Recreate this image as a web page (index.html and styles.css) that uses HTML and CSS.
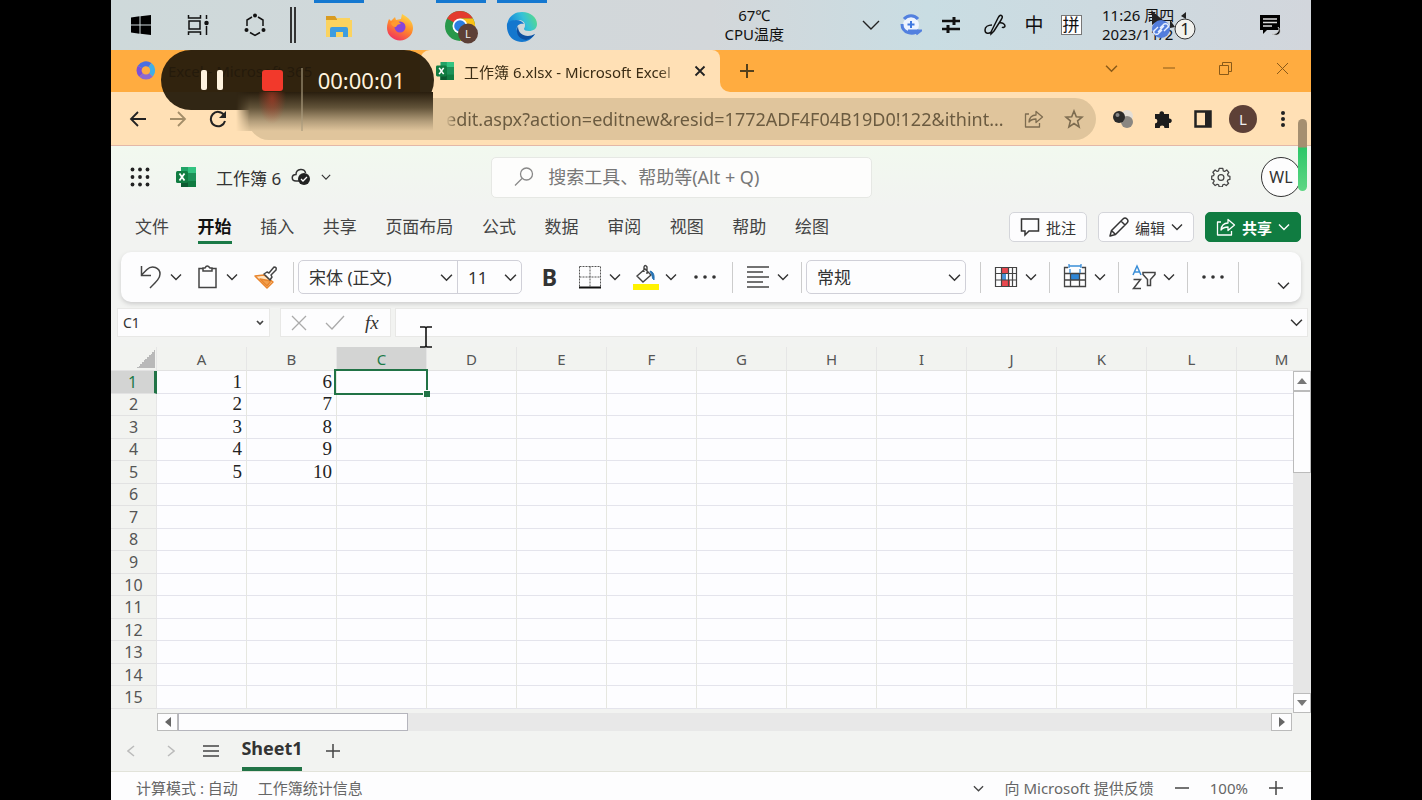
FILE: index.html
```html
<!DOCTYPE html>
<html lang="zh-CN">
<head>
<meta charset="utf-8">
<title>工作簿 6.xlsx - Microsoft Excel</title>
<link rel="stylesheet" href="styles.css">
</head>
<body>
<svg class="defs" aria-hidden="true">
  <symbol id="chev" viewBox="0 0 12 12"><path d="M1 3.500l5 5 5-5" fill="none" stroke="currentColor" stroke-width="1.400"/></symbol>
  <symbol id="share" viewBox="0 0 20 20"><path d="M5 5H1.500v13h14v-4M5 13c.5-4.500 3-7 7-7V2.500l6.500 5.500L12 13.500V10c-3 0-5 .5-7 3z" fill="none" stroke="currentColor" stroke-width="1.300" stroke-linejoin="round"/></symbol>
  <symbol id="excel" viewBox="0 0 20 20">
    <path d="M5 0h14a1 1 0 0 1 1 1v18a1 1 0 0 1-1 1H5z" fill="#21a366"/><path d="M12 0h7a1 1 0 0 1 1 1v5h-8z" fill="#33c481"/><path d="M5 6h15v14H5z" fill="#107c41"/><path d="M12 6h8v8h-8z" fill="#1d9158"/><path d="M5 13h7v7H5z" fill="#0b5a30"/><rect y="4" width="12" height="12" rx="1.500" fill="#107c41"/><path d="M3.500 6.500l5 7M8.500 6.500l-5 7" stroke="#fff" stroke-width="1.800"/>
  </symbol>
</svg>
<div class="screen">
  <header class="taskbar">
    <div class="system">
      <button class="sys" aria-label="开始菜单"><svg width="22" height="22" viewBox="0 0 22 22"><path d="M1 3.500l8.500-1.200v8.200H1zM10.500 2.200L21 1v9.500H10.500zM1 11.500h8.500v8.200L1 18.500zM10.500 11.500H21V21l-10.500-1.200z"/></svg></button>
      <button class="sys" aria-label="任务视图"><svg width="22" height="22" viewBox="0 0 22 22" fill="none" stroke="#111" stroke-width="1.500"><path d="M1.500 1v3h12V1M1.500 21v-3h12v3M2 7h11v8H2zM19.500 1v4M19.500 12v9"/><circle cx="19.500" cy="9" r="1.500" fill="#111"/></svg></button>
      <button class="sys" aria-label="小娜"><svg width="24" height="24" viewBox="0 0 24 24" fill="none" stroke="#111" stroke-width="1.500"><path d="M9 4L4 7v6M15 4l5 3v6M7 19.500l5 3 5-3"/><g fill="#111" stroke="none"><circle cx="12" cy="2.500" r="2"/><circle cx="3.500" cy="17" r="2"/><circle cx="20.500" cy="17" r="2"/></g></svg></button>
    </div>
    <div class="bars"></div>
    <div class="apps">
      <button class="app running" aria-label="文件资源管理器"><svg width="28" height="24" viewBox="0 0 28 24"><path d="M1 1h9l2 3h13v18H1z" fill="#d99b20"/><path d="M12 3h13v3H12zM1 5h26v17H1z" fill="#fbd35f"/><path d="M5 22v-8q0-2 2-2h14q2 0 2 2v8h-5v-5h-7v5z" fill="#3d9ce0"/></svg></button>
      <button class="app" aria-label="Firefox"><svg width="28" height="28" viewBox="0 0 28 28"><defs><linearGradient id="ff" x1=".8" y1="0" x2=".3" y2="1"><stop offset="0" stop-color="#ffe04a"/><stop offset=".5" stop-color="#ff8a2a"/><stop offset="1" stop-color="#f0305f"/></linearGradient></defs><path d="M3 6l2 2 4-4 1 3 5-1 1-5c7 4 11 8 11 14a13 12.500 0 0 1-26 0c0-4 1-6 2-9z" fill="url(#ff)"/><circle cx="14" cy="14" r="5.500" fill="#8745d9"/><path d="M5 10c4-3 8-2 10 1-3 0-4 1-5 3-3 0-5-2-5-4z" fill="#ff9a30"/></svg></button>
      <button class="app running" aria-label="Chrome"><svg width="34" height="34" viewBox="0 0 34 34"><circle cx="16" cy="16" r="15" fill="#28984a"/><path d="M16 16L3 8.500A15 15 0 0 1 29 8.500H16z" fill="#e33b2e"/><path d="M16 8.500h13A15 15 0 0 1 16 31l6.500-11z" fill="#fbc116"/><circle cx="16" cy="16" r="7.500" fill="#fff"/><circle cx="16" cy="16" r="5.800" fill="#2a7de1"/><circle cx="24" cy="23.500" r="10" fill="#5d4037"/><text x="24" y="28" text-anchor="middle" class="tiny">L</text></svg></button>
      <button class="app running" aria-label="Edge"><svg width="32" height="32" viewBox="0 0 32 32"><defs><linearGradient id="ed" x1="0" x2="1" y1=".3"><stop offset="0" stop-color="#1686d9"/><stop offset=".5" stop-color="#35c1d8"/><stop offset="1" stop-color="#5fe07a"/></linearGradient></defs><path d="M1 14C2 6 8 1 16 1c9 0 15 6 15 12 0 5-4 7-8 7-3 0-5-1-5-2s1-1 1-4c0-3-3-5-7-5-5 0-9 3-11 7z" fill="url(#ed)"/><path d="M1 13c2-3 6-4 9-4 4 0 7 2 8 4-6-1-8 3-7 7 1 5 6 7 11 6 3 0 5-2 7-3-3 5-8 8-13 8C7 31 0 24 1 13z" fill="#1477ce"/><path d="M12 15c-3 6 0 13 8 14 4-1 7-3 9-6-7 4-17 2-17-8z" fill="#0d4fa0"/></svg></button>
    </div>
    <div class="temp"><span>67℃</span><span>CPU温度</span></div>
    <div class="tray">
      <button class="ti" aria-label="显示隐藏的图标"><svg width="18" height="18" viewBox="0 0 18 18"><path d="M1 5l8 8 8-8" fill="none" stroke="#222" stroke-width="1.400"/></svg></button>
      <button class="ti" aria-label="录制"><svg width="22" height="22" viewBox="0 0 22 22" fill="none"><circle cx="11" cy="11" r="8" fill="#eef4ff"/><path d="M4 5a9 9 0 0 1 14 0M2 10c0 9 11 12 17 6M8 17h12l-4 3" stroke="#5280df" stroke-width="3"/><path d="M11 7v7M7.500 10.500h7" stroke="#3f78e0" stroke-width="2"/></svg></button>
      <button class="ti" aria-label="设置"><svg width="18" height="18" viewBox="0 0 18 18" fill="none" stroke="#111"><path d="M0 5h18M0 13h18" stroke-width="2.500"/><path d="M12 1v8M6 9v8" stroke-width="3"/></svg></button>
      <button class="ti pen" aria-label="手写"><svg width="22" height="22" viewBox="0 0 22 22" fill="none" stroke="#111" stroke-width="1.500"><path d="M7 18L14 4q2-4 4-2 1 1-1 4L10 17l-3 3zM8 11c-4 0-7 2-7 5 0 4 4 4 6 2M15 9c3-1 6 1 6 3 0 1-2 2-3 1"/></svg></button>
      <button class="ti ime" aria-label="中文输入">中</button>
      <button class="ti pin" aria-label="拼音"><span>拼</span></button>
      <div class="clock"><span>11:26 周四</span><span>2023/11/2</span>
        <svg class="cursorbadge" width="46" height="32" viewBox="0 0 46 32"><path d="M2 1v14l4-3 3 5 3-2-2-4h4zM20 10l5 7-5 1zM31 6l5-4v7z" fill="#222"/><circle cx="2" cy="19" r="0" /><circle cx="1" cy="1" r="0"/><circle cx="11" cy="19" r="9" fill="#527ddc"/><path d="M8 22l6-6M10 18l4-4q3-1 4 1t-1 3l-3 3M12 20l-4 4q-3 1-4-1t1-3l3-3" fill="none" stroke="#e8f0ff" stroke-width="1.400"/><circle cx="35" cy="19" r="10" fill="#f2f2ee" stroke="#333"/><text x="35" y="25" text-anchor="middle" class="badge">1</text></svg>
      </div>
      <button class="notice" aria-label="通知"><svg width="22" height="22" viewBox="0 0 22 22"><path d="M1 1h20v15H8l-4 4v-4H1z"/><path d="M4 5h14M4 8.500h14M4 12h9" stroke="#ddd" stroke-width="1.300"/><path d="M13 20c5 1 8-3 6-7 4 3 2 9-3 8z" stroke="#ccc" stroke-width=".7"/></svg></button>
    </div>
  </header>

  <div class="tabstrip">
    <div class="oldtab"><svg width="20" height="20" viewBox="0 0 20 20" fill="none" stroke-width="5"><path d="M4 6a7 7 0 0 1 10-2" stroke="#4a6ee0"/><path d="M14 4a7 7 0 0 1 1 10" stroke="#40aee8"/><path d="M15 14a7 7 0 0 1-10 0" stroke="#8c6ad0"/><path d="M5 14a7 7 0 0 1-1-8" stroke="#7a50d8"/></svg><span>Excel - Microsoft 365</span></div>
    <div class="tab"><svg width="20" height="18"><use href="#excel"/></svg><span class="tabtitle">工作簿 6.xlsx - Microsoft Excel</span><button aria-label="关闭标签页"><svg width="12" height="12" viewBox="0 0 12 12"><path d="M1.500 1.500l9 9M10.500 1.500l-9 9" stroke="#222" stroke-width="1.800"/></svg></button></div>
    <div class="newtabwrap"><button class="newtab" aria-label="新标签页"><svg width="16" height="16" viewBox="0 0 16 16"><path d="M8 1v14M1 8h14" stroke="#54401c" stroke-width="2"/></svg></button></div>
    <div class="winctl">
      <button aria-label="搜索标签页"><svg width="13" height="13"><use href="#chev"/></svg></button>
      <button aria-label="最小化"><svg width="12" height="12" viewBox="0 0 12 12"><path d="M0 6h12" stroke="currentColor"/></svg></button>
      <button aria-label="还原"><svg width="13" height="13" viewBox="0 0 13 13" fill="none" stroke="currentColor"><path d="M.5 3.500h9v9h-9zM3.500 3.500v-3h9v9h-3"/></svg></button>
      <button aria-label="关闭"><svg width="13" height="13" viewBox="0 0 13 13"><path d="M1 1l11 11M12 1L1 12" stroke="currentColor"/></svg></button>
    </div>
  </div>

  <div class="navbar">
    <button aria-label="后退"><svg width="18" height="16" viewBox="0 0 18 16" fill="none" stroke="#222" stroke-width="1.800"><path d="M17 8H2M9 1L2 8l7 7"/></svg></button>
    <button aria-label="前进"><svg width="18" height="16" viewBox="0 0 18 16" fill="none" stroke="#a38d68" stroke-width="1.800"><path d="M1 8h15M9 1l7 7-7 7"/></svg></button>
    <button aria-label="刷新"><svg width="18" height="18" viewBox="0 0 18 18"><path d="M15 5a7.200 7.200 0 1 0 1 6" fill="none" stroke="#222" stroke-width="2"/><path d="M17 1v7h-7z" fill="#222"/></svg></button>
    <div class="omni">
      <input aria-label="地址" value="edit.aspx?action=editnew&amp;resid=1772ADF4F04B19D0!122&amp;ithint...">
      <button aria-label="分享"><svg width="20" height="20"><use href="#share"/></svg></button>
      <button aria-label="收藏"><svg width="20" height="20" viewBox="0 0 20 20"><path d="M10 2l2.300 5.700 5.700.4-4.400 3.800 1.500 6L10 14.500 4.900 17.900l1.500-6L2 8.100l5.700-.4z" fill="none" stroke="currentColor" stroke-width="1.600"/></svg></button>
    </div>
    <button aria-label="扩展"><svg width="22" height="20" viewBox="0 0 22 20"><circle cx="15" cy="7" r="6" fill="#e5dfd6"/><circle cx="15" cy="13" r="6" fill="#8a8782"/><circle cx="7" cy="8" r="6" fill="#2b2b2b"/><circle cx="5.500" cy="6" r="2" fill="#888"/></svg></button>
    <button aria-label="扩展程序"><svg width="20" height="20" viewBox="0 0 20 20"><path d="M2 5h4.500a2.300 2.300 0 1 1 4.500 0H16v4.500a2.300 2.300 0 1 1 0 4.500v5h-4.500a2.400 2.400 0 0 0-4.800 0H2v-4.500a2.400 2.400 0 0 0 0-4.800z" fill="#1c1c1c"/></svg></button>
    <button aria-label="侧边栏"><svg width="18" height="18" viewBox="0 0 18 18"><path d="M1.500 1.500h15v15h-15z" fill="none" stroke="#222" stroke-width="2.500"/><path d="M11 1h6v16h-6z" fill="#222"/></svg></button>
    <button class="profile" aria-label="用户">L</button>
    <button aria-label="菜单"><svg width="6" height="18" viewBox="0 0 6 18" fill="#222"><circle cx="3" cy="3" r="2"/><circle cx="3" cy="9" r="2"/><circle cx="3" cy="15" r="2"/></svg></button>
  </div>

  <div class="recorder"><button class="pause" aria-label="暂停"><i></i><i></i></button><button class="stop" aria-label="停止"></button><i class="rule"></i><span>00:00:01</span></div>
  <div class="haze"></div>
  <div class="volume"></div>

  <div class="excelhead">
    <button class="waffle" aria-label="应用启动器"><svg width="20" height="20" viewBox="0 0 20 20" fill="#222"><g id="dots3"><circle cx="2.500" cy="2.500" r="1.900"/><circle cx="10" cy="2.500" r="1.900"/><circle cx="17.500" cy="2.500" r="1.900"/></g><use href="#dots3" y="7.500"/><use href="#dots3" y="15"/></svg></button>
    <svg width="20" height="20"><use href="#excel"/></svg>
    <button class="docname">工作簿 6 <svg width="20" height="18" viewBox="0 0 20 18"><path d="M8 13H5C0 13 0 6.500 5 6.500 5 0 14 0 14.500 5" fill="none" stroke="#333" stroke-width="1.500"/><circle cx="13" cy="11" r="6" fill="#222"/><path d="M10 11l2 2 4-4" fill="none" stroke="#fff" stroke-width="1.300"/></svg><svg width="10" height="10"><use href="#chev"/></svg></button>
    <label class="search"><svg width="20" height="20" viewBox="0 0 20 20" fill="none" stroke="#888" stroke-width="1.300"><circle cx="12.500" cy="7" r="6"/><path d="M8 11.500L1 18.500"/></svg><input type="search" aria-label="搜索" placeholder="搜索工具、帮助等(Alt + Q)"></label>
    <button class="gear" aria-label="设置"><svg width="20" height="20" viewBox="0 0 22 22" fill="none" stroke="#444" stroke-width="1.400" stroke-linejoin="round"><path d="M9 1.500h4l.5 2.700 1.500.7 2.300-1.600 2.300 2.700-1.400 2 .6 1.700 2 .6v3.400l-2.200.5-.7 1.500 1.500 2.200-2.600 2.500-2.200-1.400-1.600.6-.6 2.300H9l-.6-2.300-1.600-.6-2.200 1.400L2 17.700l1.500-2.200-.7-1.500-2-.5V10l2-.5.7-1.700-1.400-2L4.500 3.300l2.300 1.600 1.500-.7z"/><circle cx="11" cy="11.500" r="3.200"/></svg></button>
    <button class="avatar">WL</button>
  </div>

  <div class="menurow">
    <nav><button>文件</button><button class="current">开始</button><button>插入</button><button>共享</button><button>页面布局</button><button>公式</button><button>数据</button><button>审阅</button><button>视图</button><button>帮助</button><button>绘图</button></nav>
    <div class="actions">
      <button><svg width="20" height="20" viewBox="0 0 20 20" fill="none" stroke="#333" stroke-width="1.500"><path d="M1.500 2h17v12H9l-4 4v-4H1.500z"/></svg>批注</button>
      <button><svg width="20" height="20" viewBox="0 0 20 20" fill="none" stroke="#333" stroke-width="1.500" stroke-linejoin="round"><path d="M1 19l1.500-5.500L14 2q2-2 4 0t0 4L6.500 17.500zM12 4l4 4M3 14l3 3"/></svg>编辑<svg width="12" height="12"><use href="#chev"/></svg></button>
      <button class="primary"><svg width="20" height="20"><use href="#share"/></svg>共享<svg width="12" height="12"><use href="#chev"/></svg></button>
    </div>
  </div>

  <div class="ribbon">
    <button class="split" aria-label="撤消"><svg width="26" height="26" viewBox="0 0 26 26" fill="none" stroke="#444" stroke-width="1.500"><path d="M3.500 2v9.500H13M3.500 11L9 5.500c5-5 13-2 13 4.500 0 4-3 7-10 14"/></svg><svg width="12" height="12"><use href="#chev"/></svg></button>
    <button class="split" aria-label="粘贴"><svg width="26" height="26" viewBox="0 0 26 26" fill="none" stroke="#444" stroke-width="1.500"><path d="M9 4.500H5v19h17v-19h-4M9 7V4h2q2-4 5 0h2v3z"/></svg><svg width="12" height="12"><use href="#chev"/></svg></button>
    <button class="single" aria-label="格式刷"><svg width="26" height="26" viewBox="0 0 26 26" stroke-width="1.500" stroke-linejoin="round"><path d="M2 12l9-1 9 7-6 6z" fill="#ffe3c0" stroke="#e9852c"/><path d="M7 15l11 2-4 5z" fill="#f2a04e" stroke="#e9852c"/><path d="M11 10l3-2 2 1 5-6q3 0 2 3l-5 5 1 2-2 3z" fill="#fff" stroke="#444"/></svg></button>
    <i class="sep"></i>
    <div class="fontgroup">
      <div class="pick fontname"><select aria-label="字体"><option>宋体 (正文)</option></select><svg width="13" height="13"><use href="#chev"/></svg></div>
      <div class="pick fontsize"><select aria-label="字号"><option>11</option></select><svg width="13" height="13"><use href="#chev"/></svg></div>
    </div>
    <button class="single bold" aria-label="加粗">B</button>
    <button class="split" aria-label="边框"><svg width="26" height="26" viewBox="0 0 26 26" fill="none" stroke="#555"><path d="M2.500 2.500h21v20M2.500 2.500v20M13 2.500v20M2.500 13h21" stroke-dasharray="2 1"/><path d="M2 23.500h22" stroke="#111" stroke-width="2"/></svg><svg width="12" height="12"><use href="#chev"/></svg></button>
    <button class="split" aria-label="填充颜色"><svg width="26" height="26" viewBox="0 0 26 26"><path d="M0 20h26v6H0z" fill="#fff200"/><path d="M4 12l8-7 6 6-8 7zM11 8V3q1-3 3 0v7" fill="none" stroke="#444" stroke-width="1.400"/><path d="M17 7q5 1 4 9-2-1-2-5z" fill="#2874b5" stroke="#2874b5"/></svg><svg width="12" height="12"><use href="#chev"/></svg></button>
    <button class="single" aria-label="更多字体选项"><svg width="24" height="6" viewBox="0 0 24 6" fill="#333"><circle cx="3" cy="3" r="1.800"/><circle cx="12" cy="3" r="1.800"/><circle cx="21" cy="3" r="1.800"/></svg></button>
    <i class="sep"></i>
    <button class="split" aria-label="对齐"><svg width="26" height="26" viewBox="0 0 26 26" stroke="#444" stroke-width="1.500"><path d="M2 3h22M2 8h16M2 13h22M2 18h16M2 23h22"/></svg><svg width="12" height="12"><use href="#chev"/></svg></button>
    <i class="sep"></i>
    <div class="pick numfmt"><select aria-label="数字格式"><option>常规</option></select><svg width="13" height="13"><use href="#chev"/></svg></div>
    <i class="sep"></i>
    <button class="split" aria-label="条件格式"><svg width="26" height="26" viewBox="0 0 26 26"><path d="M8 3h7v6H8zM8 16h9v6H8z" fill="#e8484f"/><path d="M8 9h5v7H8z" fill="#4b94d8"/><path d="M2.500 3.500h21v19h-21zM2.500 9.500h21M2.500 16h21M8.500 3.500v19M15.500 3.500v19M19.500 3.500v19" fill="none" stroke="#444" stroke-width="1.200"/></svg><svg width="12" height="12"><use href="#chev"/></svg></button>
    <i class="sep"></i>
    <button class="split" aria-label="单元格"><svg width="26" height="26" viewBox="0 0 26 26"><path d="M8 9h10v7H8z" fill="#2f86d6"/><path d="M6 3.500H2.500v19h21v-19H20M2.500 9.500h21M2.500 16h21M8.500 9.500v13M17.500 9.500v13" fill="none" stroke="#444" stroke-width="1.300"/><path d="M7 2h12M7 0v4M19 0v4M8 5v4M18 5v4" stroke="#3a8ed8" stroke-width="1.300"/></svg><svg width="12" height="12"><use href="#chev"/></svg></button>
    <i class="sep"></i>
    <button class="split" aria-label="排序和筛选"><svg width="26" height="26" viewBox="0 0 26 26" fill="none" stroke-width="1.500"><path d="M2 11l4-9 4 9M3.500 8h5" stroke="#3a8ed8"/><path d="M2.500 15.500h7l-7 9h7.500" stroke="#444"/><path d="M12 8.500h12v2l-4.500 5v6h-3v-6l-4.500-5z" stroke="#444"/></svg><svg width="12" height="12"><use href="#chev"/></svg></button>
    <i class="sep"></i>
    <button class="single tight" aria-label="更多选项"><svg width="24" height="6" viewBox="0 0 24 6" fill="#333"><circle cx="3" cy="3" r="1.800"/><circle cx="12" cy="3" r="1.800"/><circle cx="21" cy="3" r="1.800"/></svg></button>
    <i class="sep"></i>
    <button class="expand" aria-label="展开功能区"><svg width="13" height="13"><use href="#chev"/></svg></button>
  </div>

  <div class="formula">
    <div class="namebox"><input aria-label="名称框" value="C1"><svg width="8" height="8" viewBox="0 0 8 8"><path d="M1 2l3 3 3-3" fill="none" stroke="#444" stroke-width="1.700"/></svg></div>
    <div class="fx">
      <button aria-label="取消"><svg width="16" height="16" viewBox="0 0 16 16"><path d="M1 1l14 14M15 1L1 15" stroke="#aaa" stroke-width="1.300"/></svg></button>
      <button aria-label="输入"><svg width="20" height="16" viewBox="0 0 20 16"><path d="M1 8l6 6L19 1" fill="none" stroke="#aaa" stroke-width="1.300"/></svg></button>
      <button class="fxbtn" aria-label="插入函数"><em>fx</em></button>
    </div>
    <div class="entry"><input aria-label="编辑栏"><svg width="13" height="13"><use href="#chev"/></svg></div>
    <svg class="ibeam" width="12" height="22" viewBox="0 0 12 22"><path d="M0 1h5l1 1 1-1h5M6 2v18M0 21h5l1-1 1 1h5" fill="none" stroke="#111" stroke-width="1.600"/></svg>
  </div>

  <main class="sheet">
    <table><thead><tr id="cols"></tr></thead><tbody id="cells"></tbody></table>
    <div class="vscroll"><button aria-label="向上滚动"><svg width="10" height="6"><path d="M0 6l5-6 5 6z" fill="#777"/></svg></button><div class="vthumb"></div><button class="down" aria-label="向下滚动"><svg width="10" height="6"><path d="M0 0l5 6 5-6z" fill="#777"/></svg></button></div>
  </main>

  <div class="hscroll"><button aria-label="向左滚动"><svg width="6" height="10"><path d="M6 0L0 5l6 5z" fill="#666"/></svg></button><div class="hthumb"></div><button class="right" aria-label="向右滚动"><svg width="6" height="10"><path d="M0 0l6 5-6 5z" fill="#666"/></svg></button></div>

  <div class="sheettabs">
    <button aria-label="上一个工作表"><svg width="8" height="12" viewBox="0 0 8 12"><path d="M7 1L1 6l6 5" fill="none" stroke="#bbb" stroke-width="1.500"/></svg></button>
    <button aria-label="下一个工作表"><svg width="8" height="12" viewBox="0 0 8 12"><path d="M1 1l6 5-6 5" fill="none" stroke="#bbb" stroke-width="1.500"/></svg></button>
    <button aria-label="所有工作表"><svg width="16" height="14" viewBox="0 0 16 14"><path d="M0 2h16M0 7h16M0 12h16" stroke="#444" stroke-width="1.500"/></svg></button>
    <button class="sheetname">Sheet1</button>
    <button aria-label="新工作表"><svg width="14" height="14" viewBox="0 0 14 14"><path d="M7 0v14M0 7h14" stroke="#444" stroke-width="1.500"/></svg></button>
  </div>

  <footer class="status">
    <span>计算模式 : 自动</span><span>工作簿统计信息</span>
    <div class="statusright"><svg width="11" height="11"><use href="#chev"/></svg><a href="#">向 Microsoft 提供反馈</a><button aria-label="缩小"><svg width="14" height="14" viewBox="0 0 14 14"><path d="M0 7h14" stroke="#444" stroke-width="1.500"/></svg></button><span>100%</span><button aria-label="放大"><svg width="14" height="14" viewBox="0 0 14 14"><path d="M7 0v14M0 7h14" stroke="#444" stroke-width="1.500"/></svg></button></div>
  </footer>
</div>
<script src="script.js"></script>
</body>
</html>
```
FILE: script.js
```js
const letters = 'ABCDEFGHIJKLM'.split('');
const values = { A: [1, 2, 3, 4, 5], B: [6, 7, 8, 9, 10] };
document.getElementById('cols').innerHTML =
  '<th class="corner"></th>' +
  letters.map(c => `<th scope="col"${c === 'C' ? ' class="on"' : ''}>${c}</th>`).join('');
let rows = '';
for (let r = 1; r <= 15; r++) {
  rows += `<tr><th scope="row"${r === 1 ? ' class="on"' : ''}>${r}</th>` +
    letters.map(c => `<td${c === 'C' && r === 1 ? ' class="active"' : ''}>${(values[c] || [])[r - 1] || ''}</td>`).join('') + '</tr>';
}
document.getElementById('cells').innerHTML = rows;
```
FILE: styles.css
```css
* { box-sizing: border-box; }
body { margin: 0; background: #000; font-family: "Noto Sans", "Noto Sans CJK SC", sans-serif; color: #333; }
button, input, select { font: inherit; color: inherit; border: 0; background: none; padding: 0; margin: 0; outline: 0; }
button { display: flex; align-items: center; justify-content: center; white-space: nowrap; }
svg { display: block; flex: none; }
.defs { position: absolute; width: 0; height: 0; }
.screen { position: relative; margin: 0 111px; min-height: 100vh; display: flex; flex-direction: column; background: #f2f3f1; overflow: hidden; }

.taskbar { display: flex; height: 50px; padding-left: 1px; background: linear-gradient(90deg, #ced9da, #d3d7da 50%, #c9dde3 68%, #d2d6dc); color: #111; font-size: 15px; line-height: 19px; }
.system { display: flex; }
.sys { width: 57px; }
.bars { width: 6px; height: 36px; margin: 7px 18px 0 7px; border: solid #333; border-width: 0 2px; }
.apps { display: flex; gap: 11px; }
.app { width: 50px; border-top: 3px solid transparent; }
.running { border-top-color: #1578d0; }
.tiny { font: 11px "Noto Sans", sans-serif; fill: #eee; }
.temp { display: flex; flex-direction: column; justify-content: center; align-items: center; margin-left: auto; }
.tray { display: flex; margin-left: 67px; }
.ti { width: 40px; }
.pen { width: 48px; }
.ime { width: 30px; font-size: 19px; }
.pin { width: 44px; font-size: 17px; }
.pin span { background: #fff; border: 1px solid #777; line-height: 18px; padding: 0 1px; }
.clock { position: relative; display: flex; flex-direction: column; justify-content: center; width: 136px; padding-left: 9px; }
.cursorbadge { position: absolute; left: 57px; top: 10px; }
.badge { font: 17px "Noto Sans", sans-serif; fill: #222; }
.notice { width: 82px; }

.tabstrip { display: flex; height: 42px; background: #ffac40; font-size: 15px; }
.oldtab { display: flex; align-items: center; gap: 12px; width: 309px; padding-left: 25px; color: #000; }
.tab { display: flex; align-items: center; width: 300px; padding: 0 14px 0 15px; background: #ffe0b5; border-radius: 10px 8px 0 0; gap: 9px; color: #3b2c14; }
.tabtitle { flex: 1; overflow: hidden; white-space: nowrap; mask-image: linear-gradient(90deg, #000 88%, transparent); }
.newtabwrap { display: flex; background: #ffe0b5; }
.newtabwrap, .newtab { border-top-left-radius: 0; }
.newtab { width: 54px; background: #ffac40; border-bottom-left-radius: 10px; }
.winctl { display: flex; margin-left: auto; color: #8a5a18; }
.winctl button { width: 57px; padding-bottom: 6px; }

.navbar { display: flex; align-items: center; height: 54px; padding: 0 8px 0 7px; background: #ffe0b5; border-bottom: 1px solid #e3b8a8; }
.navbar > button { width: 40px; }
.omni { flex: 1; display: flex; align-items: center; height: 42px; margin: 0 7px 0 10px; padding: 0 2px 0 198px; background: #e0c59c; border-radius: 21px; color: #6b5b40; min-width: 0; }
.omni input { flex: 1; min-width: 0; font-size: 18px; mask-image: linear-gradient(90deg, transparent, #000 10px); }
.omni button { width: 40px; color: #7d6c50; }
.navbar > .profile { width: 28px; height: 28px; margin: 0 6px; border-radius: 50%; background: #5d4037; color: #eee; font-size: 15px; }

.recorder { position: absolute; left: 50px; top: 50px; display: flex; align-items: center; width: 273px; height: 60px; padding: 0 29px 0 40px; border-radius: 30px; background: rgb(38 27 12 / 95%); color: #fff3df; font-size: 22px; }
.recorder span { margin-left: auto; }
.pause { gap: 10px; }
.pause i { width: 6px; height: 20px; border-radius: 2px; background: #fff3df; }
.stop { width: 21px; height: 21px; margin-left: 39px; border-radius: 3px; background: #f2392b; }
.rule { align-self: flex-end; width: 2px; height: 42px; margin-left: 18px; background: #75684f; }
.haze { position: absolute; left: 125px; top: 92px; width: 197px; height: 39px; background: linear-gradient(90deg, transparent 65px, rgb(170 155 125 / 60%) 65px 67px, transparent 67px), radial-gradient(ellipse 14px 26px at 36px 6px, rgb(200 60 40 / 55%), transparent), linear-gradient(#291e0e, #625339 40%, #b39d7a 75%, #e0c59c); mask-image: linear-gradient(90deg, transparent, #000 14px); }
.volume { position: absolute; right: 4px; top: 119px; z-index: 1; width: 9px; height: 72px; border-radius: 5px; background: linear-gradient(#a58f70 28px, #2dc768 29px, #5fd684); }

.excelhead { display: flex; align-items: center; height: 62px; padding: 0 10px 0 19px; background: linear-gradient(#f2f9ef, #f2f3f1); }
.waffle { width: 20px; margin-right: 26px; }
.docname { margin-left: 20px; gap: 10px; font-size: 17px; }
.search { display: flex; align-items: center; gap: 14px; width: 381px; height: 41px; margin-left: 160px; padding-left: 22px; background: #fdfdfc; border: 1px solid #e6e8e4; border-radius: 5px; }
.search input { flex: 1; min-width: 0; font-size: 18px; }
.search input::placeholder { color: #777; opacity: 1; }
.gear { margin-left: auto; margin-right: 30px; }
.avatar { width: 40px; height: 40px; border: 1px solid #333; border-radius: 50%; background: #fdfdfd; font-size: 16px; }

.menurow { display: flex; align-items: center; justify-content: space-between; height: 38px; padding: 0 10px 0 24px; }
nav { display: flex; justify-content: space-between; width: 694px; font-size: 17px; color: #444; }
nav button { height: 34px; border-bottom: 3px solid transparent; }
.current { font-weight: 700; color: #111; border-bottom-color: #1b7a47; }
.actions { display: flex; gap: 11px; font-size: 15px; }
.actions button { gap: 6px; height: 30px; padding: 0 10px; background: #fdfdfe; border: 1px solid #d4d5da; border-radius: 5px; }
.actions .primary { background: #107c41; border-color: #107c41; color: #fff; font-weight: 700; }

.ribbon { display: flex; align-items: center; gap: 12px; height: 50px; margin: 6px 10px 0; padding: 0 11px 0 17px; background: #fdfdfe; border-radius: 10px; box-shadow: 0 2px 4px #ccc; }
.split { width: 44px; gap: 6px; }
.single { width: 31px; }
.tight { width: 26px; }
.bold { font-size: 23px; font-weight: 700; }
.sep { width: 1px; height: 31px; background: #ccc; }
.fontgroup { display: flex; height: 34px; margin-left: -8px; border: 1px solid #d0d0d8; border-radius: 5px; }
.pick { position: relative; display: flex; }
.pick select { appearance: none; width: 100%; padding-left: 10px; font-size: 17px; }
.pick svg { position: absolute; right: 4px; top: 10px; pointer-events: none; }
.fontname { width: 159px; border-right: 1px solid #d0d0d8; }
.fontsize { width: 63px; }
.numfmt { width: 160px; height: 34px; margin: 0 2px 0 -8px; border: 1px solid #d0d0d8; border-radius: 5px; }
.expand { margin-left: auto; align-self: flex-end; padding-bottom: 10px; }

.formula { position: relative; z-index: 1; display: flex; height: 29px; margin: 6px 3px 0 6px; }
.namebox, .fx, .entry { display: flex; align-items: center; background: #fdfdfe; border: 1px solid #e8e8e6; }
.namebox { width: 153px; padding: 0 5px; }
.namebox input { flex: 1; min-width: 0; font-size: 14px; }
.fx { width: 111px; margin: 0 4px 0 10px; }
.fx button { flex: 1; }
.fxbtn { font-family: "Liberation Serif", serif; font-size: 19px; }
.entry { flex: 1; padding-right: 4px; }
.entry input { flex: 1; }
.ibeam { position: absolute; left: 303px; top: 18px; }

.sheet { position: relative; flex: 1; display: flex; margin-top: 10px; overflow: hidden; }
table { flex: none; width: 1216px; height: 362px; table-layout: fixed; border-collapse: separate; border-spacing: 0; background: #fdfdff; }
th, td { padding: 0; overflow: hidden; line-height: 20px; }
th { background: #f2f3f0; font-size: 15px; font-weight: 400; color: #555; border-right: 1px solid #e6e6e6; border-bottom: 1px solid #e2e2e2; }
thead th { height: 24px; width: 90px; }
thead .corner { width: 46px; background: linear-gradient(135deg, transparent 50%, #b9b9b9 50%) 26px 3px / 18px 18px no-repeat #f2f3f0; }
td { border-right: 1px solid #e6e7e0; border-bottom: 1px solid #e4e4ec; padding-right: 4px; text-align: right; font-family: "Liberation Serif", serif; font-size: 19px; color: #222; }
th.on { background: #d3d4d3; color: #1b7a47; }
tbody th.on { border-right: 3px solid #217346; }
tbody th { font-size: 16px; }
.active { position: relative; overflow: visible; }
.active::before { content: ""; position: absolute; inset: -2px -2px -2px -3px; border: 2px solid #217346; }
.active::after { content: ""; position: absolute; right: -4px; bottom: -4px; width: 6px; height: 6px; background: #217346; border: solid #fff; border-width: 1px 0 0 1px; }
.vscroll { position: absolute; right: 0; top: 24px; bottom: 0; display: flex; flex-direction: column; width: 18px; background: #e6e6e6; }
.vscroll button { height: 20px; background: #fdfdfe; border: 1px solid #bbb; }
.vthumb { height: 82px; background: #fdfdfe; border: 1px solid #bbb; }
.vscroll .down { margin-top: auto; }

.hscroll { display: flex; height: 18px; margin: 0 19px 0 46px; background: #e8e8e8; }
.hscroll button { width: 21px; background: #fdfdfe; border: 1px solid #bbb; }
.hthumb { width: 230px; background: #fdfdfe; border: 1px solid #b5b5bd; }
.hscroll .right { margin-left: auto; }

.sheettabs { display: flex; height: 41px; border-bottom: 1px solid #e2e3da; }
.sheettabs button { width: 40px; }
.sheettabs .sheetname { width: 60px; margin: 0 11px; padding-bottom: 2px; font-size: 18px; font-weight: 700; border-bottom: 4px solid #217346; }

.status { display: flex; align-items: center; height: 28px; gap: 20px; padding: 4px 28px 0 25px; background: #fdfdfe; font-size: 15px; line-height: 20px; color: #666; }
.statusright { display: flex; align-items: center; margin-left: auto; gap: 21px; }
.statusright svg { color: #444; }
a { color: inherit; text-decoration: none; }
```
